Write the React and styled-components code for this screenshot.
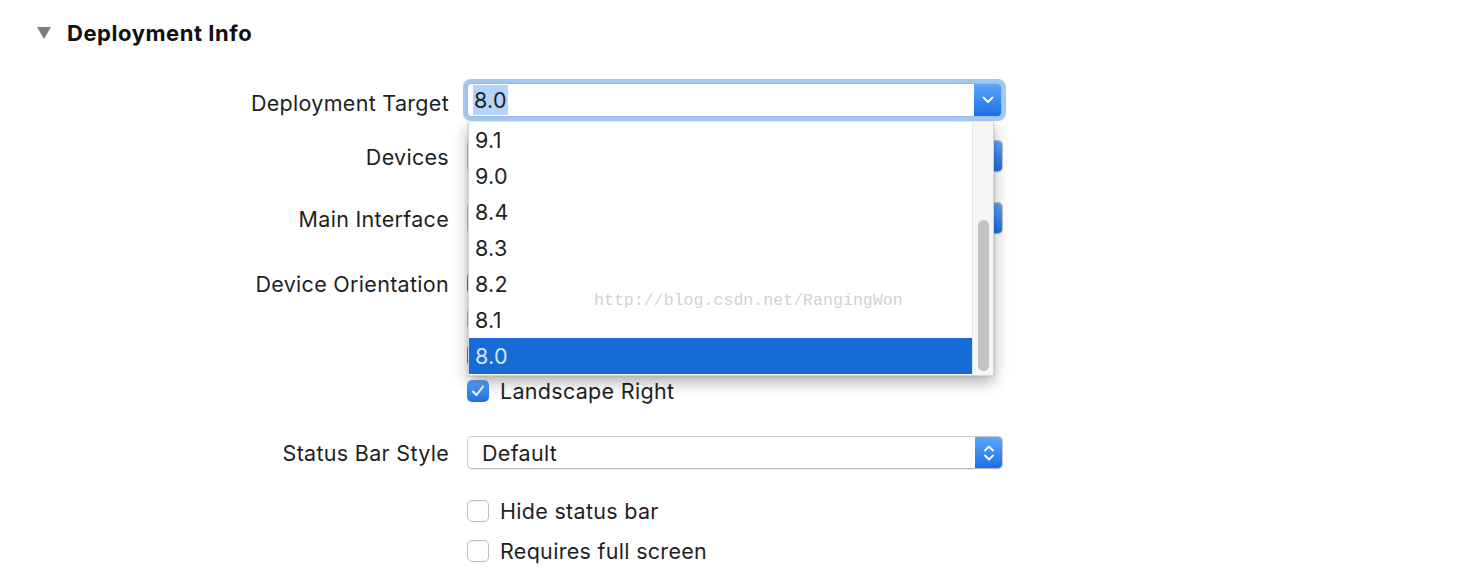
import React from 'react'
import styled, { createGlobalStyle, css } from 'styled-components'

const GlobalStyle = createGlobalStyle`
  body {
    margin: 0;
    background: #ffffff;
    font-family: Inter, "Liberation Sans", Arial, sans-serif;
    color: #1f1f1f;
  }
`

const versions = ['9.1', '9.0', '8.4', '8.3', '8.2', '8.1', '8.0']
// the first three sit under the open menu, only their box edges show
const orientations = [
  { label: '', on: true },
  { label: '', on: false },
  { label: '', on: true },
  { label: 'Landscape Right', on: true }
]

const blueFill = css`
  background: linear-gradient(#5ea8f9, #1b6fe6);
`

const textStyle = css`
  font-size: 21.5px;
  letter-spacing: 0.3px;
`

const Page = styled.div`
  position: relative;
  width: 1478px;
  height: 580px;
  overflow: hidden;
`

const Header = styled.div`
  display: flex;
  align-items: center;
  gap: 16px;
  height: 66px;
  padding-left: 37px;
`

const Disclosure = styled.span`
  width: 0;
  height: 0;
  border-left: 7.5px solid transparent;
  border-right: 7.5px solid transparent;
  border-top: 12px solid #7d7d7d;
`

const Title = styled.h2`
  margin: 0;
  font-size: 22px;
  font-weight: 700;
  letter-spacing: 0.55px;
  color: #111;
`

const Row = styled.div`
  display: grid;
  grid-template-columns: 449px 545px;
  column-gap: 14px;
  margin-top: ${p => p.$mt}px;
  align-items: start;
`

const Label = styled.div`
  height: ${p => p.$h}px;
  line-height: ${p => p.$h}px;
  padding-top: ${p => p.$pt || 1}px;
  box-sizing: border-box;
  text-align: right;
  white-space: nowrap;
  ${textStyle}
`

const Control = styled.div`
  position: relative;
  padding-left: ${p => (p.$flush ? 0 : 4)}px;
`

const FocusRing = styled.div`
  position: relative;
  width: 543px;
  height: 42px;
  box-sizing: border-box;
  padding: 4px;
  border-radius: 8px;
  background: #a4c7f2;
  z-index: 3;
`

const ComboField = styled.div`
  display: flex;
  height: 34px;
  box-sizing: border-box;
  background: #fff;
  border: 1px solid #9fb9dd;
  border-radius: 4px;
  overflow: hidden;
`

const ComboText = styled.div`
  flex: 1;
  display: flex;
  align-items: center;
  padding-left: 5px;
  ${textStyle}
`

const Selection = styled.span`
  background: #b3d4fc;
  padding: 2px 1px;
`

const ArrowButton = styled.div`
  width: 27px;
  display: flex;
  align-items: center;
  justify-content: center;
  ${blueFill}
`

const Popup = styled.div`
  display: flex;
  width: 536px;
  height: ${p => p.$h}px;
  box-sizing: border-box;
  background: #fff;
  border: 1px solid #c9c9c9;
  border-bottom-color: #b5b5b5;
  border-radius: 5px;
  overflow: hidden;
  box-shadow: 0 1px 1px rgba(0, 0, 0, 0.06);
`

const PopupText = styled.div`
  flex: 1;
  display: flex;
  align-items: center;
  padding-left: 14px;
  ${textStyle}
`

const Menu = styled.div`
  position: absolute;
  top: 43px;
  left: 5px;
  width: 526px;
  height: 254px;
  box-sizing: border-box;
  display: flex;
  background: #fff;
  border: 1px solid #d4d4d4;
  border-top: none;
  box-shadow: 0 6px 14px rgba(0, 0, 0, 0.32), 0 0 2px rgba(0, 0, 0, 0.15);
  z-index: 2;
`

const MenuList = styled.div`
  flex: 1;
  display: flex;
  flex-direction: column;
`

const MenuItem = styled.div`
  height: 36px;
  display: flex;
  align-items: center;
  padding-left: 6px;
  ${textStyle}
  color: ${p => (p.$active ? '#d3e4fd' : '#1f1f1f')};
  background: ${p => (p.$active ? '#156cd6' : 'transparent')};
`

const Track = styled.div`
  width: 21px;
  display: flex;
  flex-direction: column;
  justify-content: flex-end;
  align-items: center;
  padding-bottom: 4px;
  box-sizing: border-box;
  background: #f6f6f6;
  border-left: 1px solid #e4e4e4;
`

const Thumb = styled.div`
  width: 11px;
  height: 151px;
  border-radius: 6px;
  background: #c2c2c2;
`

const CheckList = styled.div`
  display: flex;
  flex-direction: column;
`

const CheckRow = styled.label`
  display: flex;
  align-items: center;
  gap: 11px;
  height: ${p => p.$h || 36}px;
  ${textStyle}
`

const Box = styled.span`
  width: 22px;
  height: 22px;
  box-sizing: border-box;
  border-radius: 5px;
  display: flex;
  align-items: center;
  justify-content: center;
  ${p =>
    p.$on
      ? blueFill
      : css`
          background: #fff;
          border: 1px solid #bdbdbd;
          box-shadow: inset 0 1px 1px rgba(0, 0, 0, 0.04);
        `}
`

const Watermark = styled.div`
  position: absolute;
  left: 594px;
  top: 291px;
  font-family: "Liberation Mono", "DejaVu Sans Mono", monospace;
  font-size: 16.6px;
  color: #d2d2d2;
  z-index: 5;
  white-space: nowrap;
`

const Chevron = () => (
  <svg width="12" height="8" viewBox="0 0 12 8">
    <path d="M1.5 1.5 L6 6 L10.5 1.5" fill="none" stroke="#fff" strokeWidth="1.8" strokeLinecap="round" strokeLinejoin="round" />
  </svg>
)

const Stepper = () => (
  <svg width="12" height="18" viewBox="0 0 12 18">
    <path d="M2 6.5 L6 2.5 L10 6.5 M2 11.5 L6 15.5 L10 11.5" fill="none" stroke="#fff" strokeWidth="1.8" strokeLinecap="round" strokeLinejoin="round" />
  </svg>
)

const Check = () => (
  <svg width="14" height="12" viewBox="0 0 14 12">
    <path d="M2 6.5 L5.5 10 L12 1.5" fill="none" stroke="#fff" strokeWidth="2" strokeLinecap="round" strokeLinejoin="round" />
  </svg>
)

const CheckItem = ({ on, children, h }) => (
  <CheckRow $h={h}>
    <Box $on={on}>{on && <Check />}</Box>
    {children}
  </CheckRow>
)

const App = () => {
  return (
    <Page>
      <GlobalStyle />
      <Header>
        <Disclosure />
        <Title>Deployment Info</Title>
      </Header>

      <Row $mt={13}>
        <Label $h={42} $pt={3}>Deployment Target</Label>
        <Control $flush>
          <FocusRing>
            <ComboField>
              <ComboText><Selection>8.0</Selection></ComboText>
              <ArrowButton><Chevron /></ArrowButton>
            </ComboField>
          </FocusRing>
          <Menu>
            <MenuList>
              {versions.map(v => (
                <MenuItem key={v} $active={v === '8.0'}>{v}</MenuItem>
              ))}
            </MenuList>
            <Track><Thumb /></Track>
          </Menu>
        </Control>
      </Row>

      <Row $mt={19}>
        <Label $h={32}>Devices</Label>
        <Control>
          <Popup $h={32}>
            <PopupText />
            <ArrowButton><Stepper /></ArrowButton>
          </Popup>
        </Control>
      </Row>

      <Row $mt={30}>
        <Label $h={32}>Main Interface</Label>
        <Control>
          <Popup $h={32}>
            <PopupText />
            <ArrowButton><Chevron /></ArrowButton>
          </Popup>
        </Control>
      </Row>

      <Row $mt={31}>
        <Label $h={36}>Device Orientation</Label>
        <Control>
          <CheckList>
            {orientations.map((o, i) => (
              <CheckItem key={i} on={o.on}>{o.label}</CheckItem>
            ))}
          </CheckList>
        </Control>
      </Row>

      <Row $mt={27}>
        <Label $h={33}>Status Bar Style</Label>
        <Control>
          <Popup $h={33}>
            <PopupText>Default</PopupText>
            <ArrowButton><Stepper /></ArrowButton>
          </Popup>
        </Control>
      </Row>

      <Row $mt={22}>
        <Label $h={40} />
        <Control>
          <CheckList>
            <CheckItem on={false} h={40}>Hide status bar</CheckItem>
            <CheckItem on={false} h={40}>Requires full screen</CheckItem>
          </CheckList>
        </Control>
      </Row>

      <Watermark>http://blog.csdn.net/RangingWon</Watermark>
    </Page>
  )
}

export default App
